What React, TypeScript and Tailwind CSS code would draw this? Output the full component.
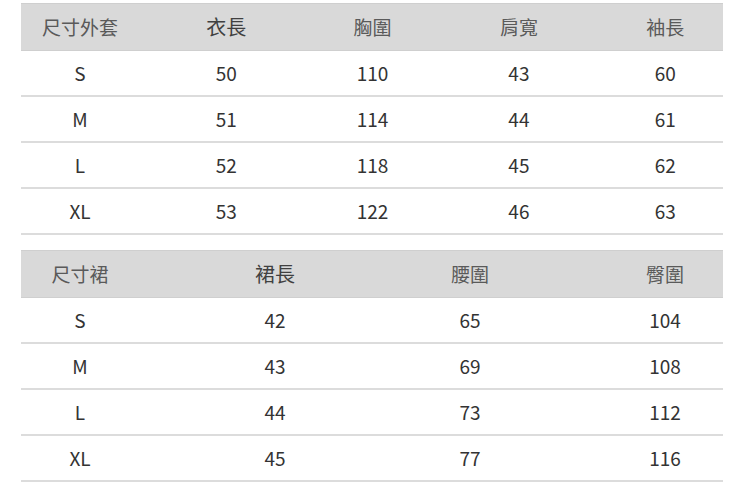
import React from "react";

const font = { fontFamily: '"Noto Sans CJK TC", "Noto Sans", sans-serif' };

const t1Head = ["尺寸外套", "衣長", "胸圍", "肩寬", "袖長"];
const t1Rows = [
  ["S", "50", "110", "43", "60"],
  ["M", "51", "114", "44", "61"],
  ["L", "52", "118", "45", "62"],
  ["XL", "53", "122", "46", "63"],
];
const t2Head = ["尺寸裙", "裙長", "腰圍", "臀圍"];
const t2Rows = [
  ["S", "42", "65", "104"],
  ["M", "43", "69", "108"],
  ["L", "44", "73", "112"],
  ["XL", "45", "77", "116"],
];

function Table({
  head,
  rows,
  cols,
}: {
  head: string[];
  rows: string[][];
  cols: string;
}) {
  return (
    <div className="w-[702px]">
      <div
        className={`grid ${cols} h-[48px] items-center bg-[#d9d9d9] border-t border-b border-[#cfcfcf] pl-[19px]`}
      >
        {head.map((h, i) => (
          <div
            key={i}
            className={`text-center ${
              i === 1 ? "text-[20px] text-[#404040]" : "text-[19px] text-[#5a5a5a]"
            }`}
          >
            {h}
          </div>
        ))}
      </div>
      {rows.map((r, ri) => (
        <div
          key={ri}
          className={`grid ${cols} h-[46px] items-center border-b-2 border-[#dcdcdc] pl-[19px]`}
        >
          {r.map((c, ci) => (
            <div key={ci} className="text-center text-[19px] text-[#333333]">
              {c}
            </div>
          ))}
        </div>
      ))}
    </div>
  );
}

export default function App() {
  return (
    <div className="w-[750px] h-[488px] bg-white overflow-hidden" style={font}>
      <div className="pl-[21px] pt-[3px] flex flex-col gap-[15px]">
        <Table
          head={t1Head}
          rows={t1Rows}
          cols="grid-cols-[repeat(5,80px)] gap-x-[66.3px]"
        />
        <Table
          head={t2Head}
          rows={t2Rows}
          cols="grid-cols-[repeat(4,80px)] gap-x-[115px]"
        />
      </div>
    </div>
  );
}
